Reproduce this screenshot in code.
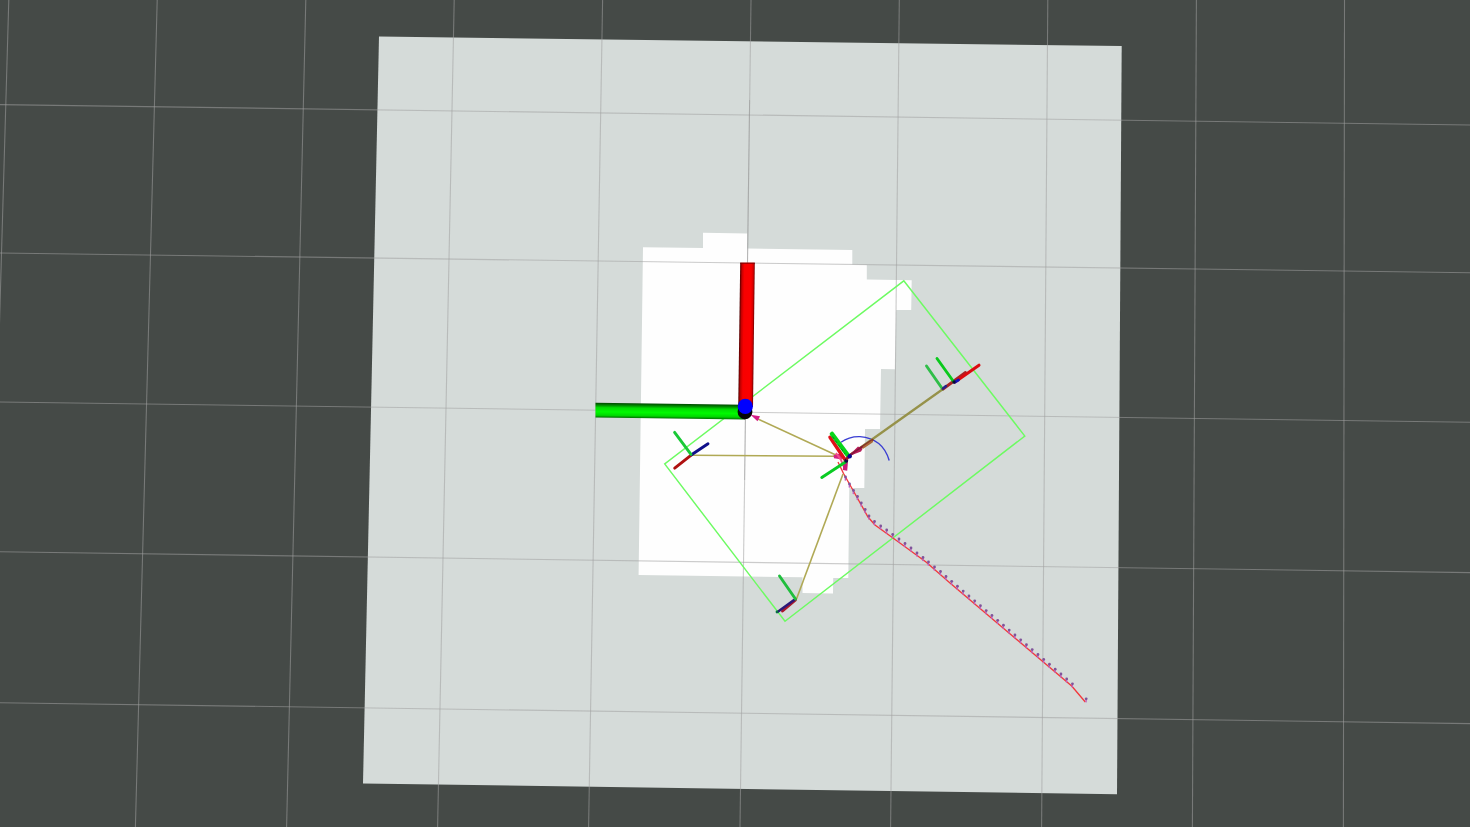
type Pt = [number, number];
type Seg = [number, number, number, number];

const gridLines: Seg[] = [
  [8.8, 0, -15, 827],
  [157.2, 0, 135.4, 827],
  [305.8, 0, 286.6, 827],
  [454.2, 0, 437.6, 827],
  [602.6, 0, 588.6, 827],
  [751, 0, 740, 827],
  [899.3, 0, 890.6, 827],
  [1047.8, 0, 1041.6, 827],
  [1196.4, 0, 1192.4, 827],
  [1344.5, 0, 1343.4, 827],
  [0, 104.6, 1470, 125],
  [0, 253, 1470, 272.7],
  [0, 402, 1470, 422.3],
  [0, 551.8, 1470, 572.6],
  [0, 702.7, 1470, 723.6],
];

const trailStart: Pt[] = [
  [845.5, 477], [849.5, 484], [853.5, 490.5], [857.5, 496.5], [861.3, 503],
  [865.2, 509.5], [869, 516], [874.5, 521.5], [880.7, 526], [886.7, 530],
  [892.7, 534.5], [899, 539], [905, 543.5], [911, 548], [917, 553],
  [923, 557.5], [928.5, 562], [934.5, 567], [940.5, 571.5], [946, 576.5],
];
const trailEnd: Pt[] = Array.from({ length: 22 }, (_, i): Pt => [951.7 + i * 5.75, 581.3 + i * 4.88]);
const poses: Pt[] = [...trailStart, ...trailEnd, [1086.2, 698.8]];

function Bar({ s, color, w = 2.9 }: { s: Seg; color: string; w?: number }) {
  return <line x1={s[0]} y1={s[1]} x2={s[2]} y2={s[3]} stroke={color} strokeWidth={w} strokeLinecap="round" />;
}

function Map() {
  return (
    <g>
      <polygon points="379,36.5 1121.7,46 1117,794.2 363,783.5" fill="#d5dbd9" />
      <polygon
        fill="#fefefe"
        points="643,247.3 703,248 703,232.8 747.3,233.5 747.3,248.6 852.3,250 852.3,264.6 866.8,265 866.8,279.4 911.7,280.3 911.2,310 896.2,310 895,369.3 881,369 880,429 865,429 864.3,488 849.3,488 848.3,578 833.2,578 833,593.6 802.5,593 802.5,577.3 638.6,575"
      />
    </g>
  );
}

function OriginAxes() {
  return (
    <g>
      <polygon points="595.5,402.8 745,404.8 745,419.6 595.5,417.6" fill="url(#greenBar)" />
      <circle cx="745" cy="411.8" r="7.4" fill="#050505" />
      <polygon points="740.2,262.7 754.8,262.7 753,407 738.2,407" fill="url(#redBar)" />
      <line x1="740.2" y1="263.2" x2="754.8" y2="263.2" stroke="#800000" strokeWidth="1" />
      <circle cx="745.3" cy="406.4" r="7.6" fill="#0000fe" />
    </g>
  );
}

function Trail() {
  return (
    <g>
      <polyline
        points="838,462 843.5,473.5 854,492 868,517 875,525 893,538 926,562 950,583 1071.7,686 1085.3,702"
        fill="none"
        stroke="#f2383c"
        strokeWidth="1.35"
      />
      {poses.map(([x, y], i) => (
        <g key={i}>
          <line x1={x} y1={y} x2={x - 0.2} y2={y + 3.6} stroke="#c062c0" strokeWidth="1.4" />
          <circle cx={x} cy={y} r="1.4" fill="#80549a" />
        </g>
      ))}
    </g>
  );
}

export default function App() {
  return (
    <main className="h-screen w-full overflow-hidden bg-[#454a47]">
      <svg className="block h-[827px] w-[1470px]" viewBox="0 0 1470 827">
        <defs>
          <linearGradient id="redBar" gradientUnits="userSpaceOnUse" x1="739.2" y1="334" x2="753.9" y2="334.2">
            <stop offset="0" stopColor="#500000" />
            <stop offset="0.14" stopColor="#c80000" />
            <stop offset="0.3" stopColor="#f80000" />
            <stop offset="0.75" stopColor="#fb0000" />
            <stop offset="0.9" stopColor="#d40000" />
            <stop offset="1" stopColor="#700000" />
          </linearGradient>
          <linearGradient id="greenBar" gradientUnits="userSpaceOnUse" x1="670.2" y1="403.8" x2="670" y2="418.6">
            <stop offset="0" stopColor="#004800" />
            <stop offset="0.14" stopColor="#008200" />
            <stop offset="0.32" stopColor="#00dc00" />
            <stop offset="0.6" stopColor="#00fa00" />
            <stop offset="0.84" stopColor="#00d800" />
            <stop offset="1" stopColor="#006800" />
          </linearGradient>
        </defs>

        <Map />

        {gridLines.map((s, i) => (
          <line key={i} x1={s[0]} y1={s[1]} x2={s[2]} y2={s[3]} stroke="#a0a0a0" strokeOpacity="0.55" strokeWidth="1.1" />
        ))}
        <line x1="749.6" y1="100" x2="744.6" y2="480" stroke="#808080" strokeOpacity="0.3" strokeWidth="1" />

        <polygon points="903.8,280.8 1024.8,436 785,621.3 664.7,464" fill="none" stroke="#6dfb62" strokeWidth="1.45" />
        <Trail />
        <path d="M841 442.3 Q849 436.3 860 436.6 Q883 438.5 889.2 460.5" fill="none" stroke="#3a3ed2" strokeWidth="1.4" />

        <g fill="none" stroke="#b0a955" strokeWidth="1.6">
          <path d="M758 419L838 456" />
          <path d="M692 455.2L836 456.2" />
          <path d="M796.5 599L843 474" />
          <path d="M848 456.5L943 389" stroke="#96924a" strokeWidth="2.3" />
        </g>

        <OriginAxes />
        <polygon points="750.5,414.8 760,416.2 757.5,421.2" fill="#d51c86" />

        <Bar s={[926.5, 366, 942.5, 389]} color="#2fbe48" />
        <Bar s={[943, 389, 965.5, 372.5]} color="#a92325" />
        <Bar s={[943, 388.5, 946, 386]} color="#242487" w={2.4} />
        <Bar s={[955, 382, 979, 365.2]} color="#dc0b10" w={3} />
        <Bar s={[937, 358.5, 953.5, 381.5]} color="#0ac91c" />
        <Bar s={[954.5, 382.3, 958.5, 380]} color="#1010c0" w={2.8} />
        <circle cx="954" cy="382" r="1.7" fill="#080c30" />

        <Bar s={[691.5, 454.8, 674.7, 468.2]} color="#af1010" />
        <Bar s={[691.5, 454.8, 708, 443.7]} color="#10108a" />
        <Bar s={[674.6, 432.3, 691, 454.3]} color="#19c936" />

        <Bar s={[795.5, 599.8, 782.5, 611]} color="#a9182c" />
        <Bar s={[794, 600, 777.8, 611.7]} color="#2b1979" w={2.4} />
        <circle cx="777" cy="612" r="1.4" fill="#087044" />
        <Bar s={[779.5, 576, 795.5, 599]} color="#20be3d" />

        <Bar s={[850, 455, 872.5, 440]} color="#85352a" w={2.4} />
        <Bar s={[863, 447.8, 872, 441.6]} color="#ad6a37" w={2} />
        <polygon points="848,456.5 858,446.5 862.5,449 861,451.5" fill="#b71c58" />
        <Bar s={[851, 454.3, 862, 446.8]} color="#87143a" w={1.6} />
        <polygon points="833.5,455.3 841.5,453 842,459.5 834,458.3" fill="#d42283" />
        <path d="M836 453L841 460L844.5 468" stroke="#f34d87" strokeWidth="1.9" fill="none" />
        <polygon points="843.6,461.5 848,461.5 847.2,470.8 842.8,470" fill="#cc1979" />
        <Bar s={[830, 437.3, 844.5, 459]} color="#df1018" w={3.5} />
        <Bar s={[832, 434, 848, 455.5]} color="#07d61a" w={4.6} />
        <path d="M832.5 436.5L845 454" stroke="#087b1b" strokeWidth="0.9" strokeDasharray="3 2" />
        <Bar s={[821.8, 477.4, 845.5, 462]} color="#0acb23" w={3} />
        <circle cx="846.2" cy="460.7" r="2" fill="#090840" />
        <path d="M846 459.5L850 455.5" stroke="#9b1429" strokeWidth="3" />
        <circle cx="849.7" cy="456.2" r="2.2" fill="#080890" />
      </svg>
    </main>
  );
}
